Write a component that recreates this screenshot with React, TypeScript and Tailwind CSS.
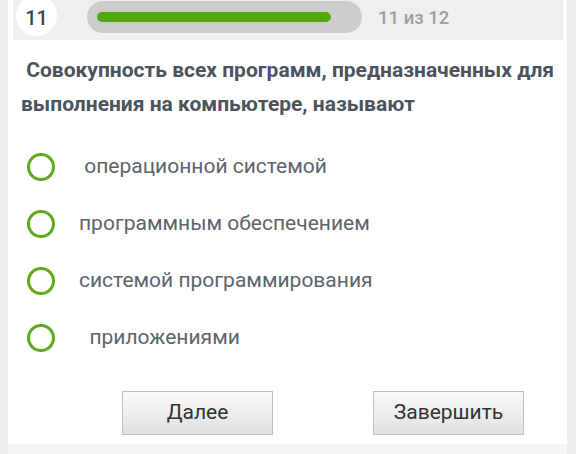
const options = [
  "\u00a0операционной системой",
  "программным обеспечением",
  "системой программирования",
  "\u00a0\u00a0приложениями",
];

function Radio() {
  return (
    <span className="block w-[28px] h-[28px] rounded-full border-[3px] border-[#5ea91f] bg-white shrink-0" />
  );
}

export default function App() {
  const current = 11;
  const total = 12;

  return (
    <div className="w-[576px] h-[454px] overflow-hidden bg-[#ececec] pl-[8px] pr-[9px] font-['Roboto','Liberation_Sans',sans-serif]">
      <div className="h-full bg-white flex flex-col">
        {/* Header with progress */}
        <div className="h-[40px] mx-[5px] mr-[4px] bg-[#efefef] flex items-start overflow-hidden">
          <div className="ml-[3px] -mt-[5px] w-[41px] h-[41px] rounded-full bg-white flex items-center justify-center pt-[5px] text-[20px] font-medium text-[#3d4650]">
            {current}
          </div>
          <div className="ml-[30px] mt-[1px] w-[275px] h-[32px] rounded-full bg-[#cccccc] pl-[10px] pr-[10px] flex items-center">
            <div className="w-[255px] h-[10px]">
              <div
                className="h-full rounded-full bg-[#55a80c]"
                style={{ width: `${(current / total) * 100}%` }}
              />
            </div>
          </div>
          <div className="ml-[16px] mt-[5px] text-[18.5px] font-medium text-[#9e9e9e]">
            {current} из {total}
          </div>
        </div>

        {/* Question */}
        <div className="pt-[13px] pl-[13px] pr-[4px] text-[21px] leading-[34px] font-bold text-[#4b545d]">
          {"\u00a0"}Совокупность всех программ, предназначенных для выполнения на компьютере, называют
        </div>

        {/* Options */}
        <div className="mt-[32px] pl-[19px] flex flex-col gap-[29px]">
          {options.map((o) => (
            <label key={o} className="flex items-center gap-[24px] h-[28px]">
              <Radio />
              <span className="text-[21px] text-[#5d646c] whitespace-pre">{o}</span>
            </label>
          ))}
        </div>

        {/* Buttons */}
        <div className="mt-[39px] pl-[114px] flex gap-[100px]">
          <button className="w-[151px] h-[44px] border border-[#bdbdbd] bg-gradient-to-b from-[#f9f9f9] to-[#e1e1e1] text-[21px] text-[#333333]">
            Далее
          </button>
          <button className="w-[151px] h-[44px] border border-[#bdbdbd] bg-gradient-to-b from-[#f9f9f9] to-[#e1e1e1] text-[21px] text-[#333333]">
            Завершить
          </button>
        </div>

        <div className="mt-auto h-[10px] bg-[#f4f4f5]" />
      </div>
    </div>
  );
}
